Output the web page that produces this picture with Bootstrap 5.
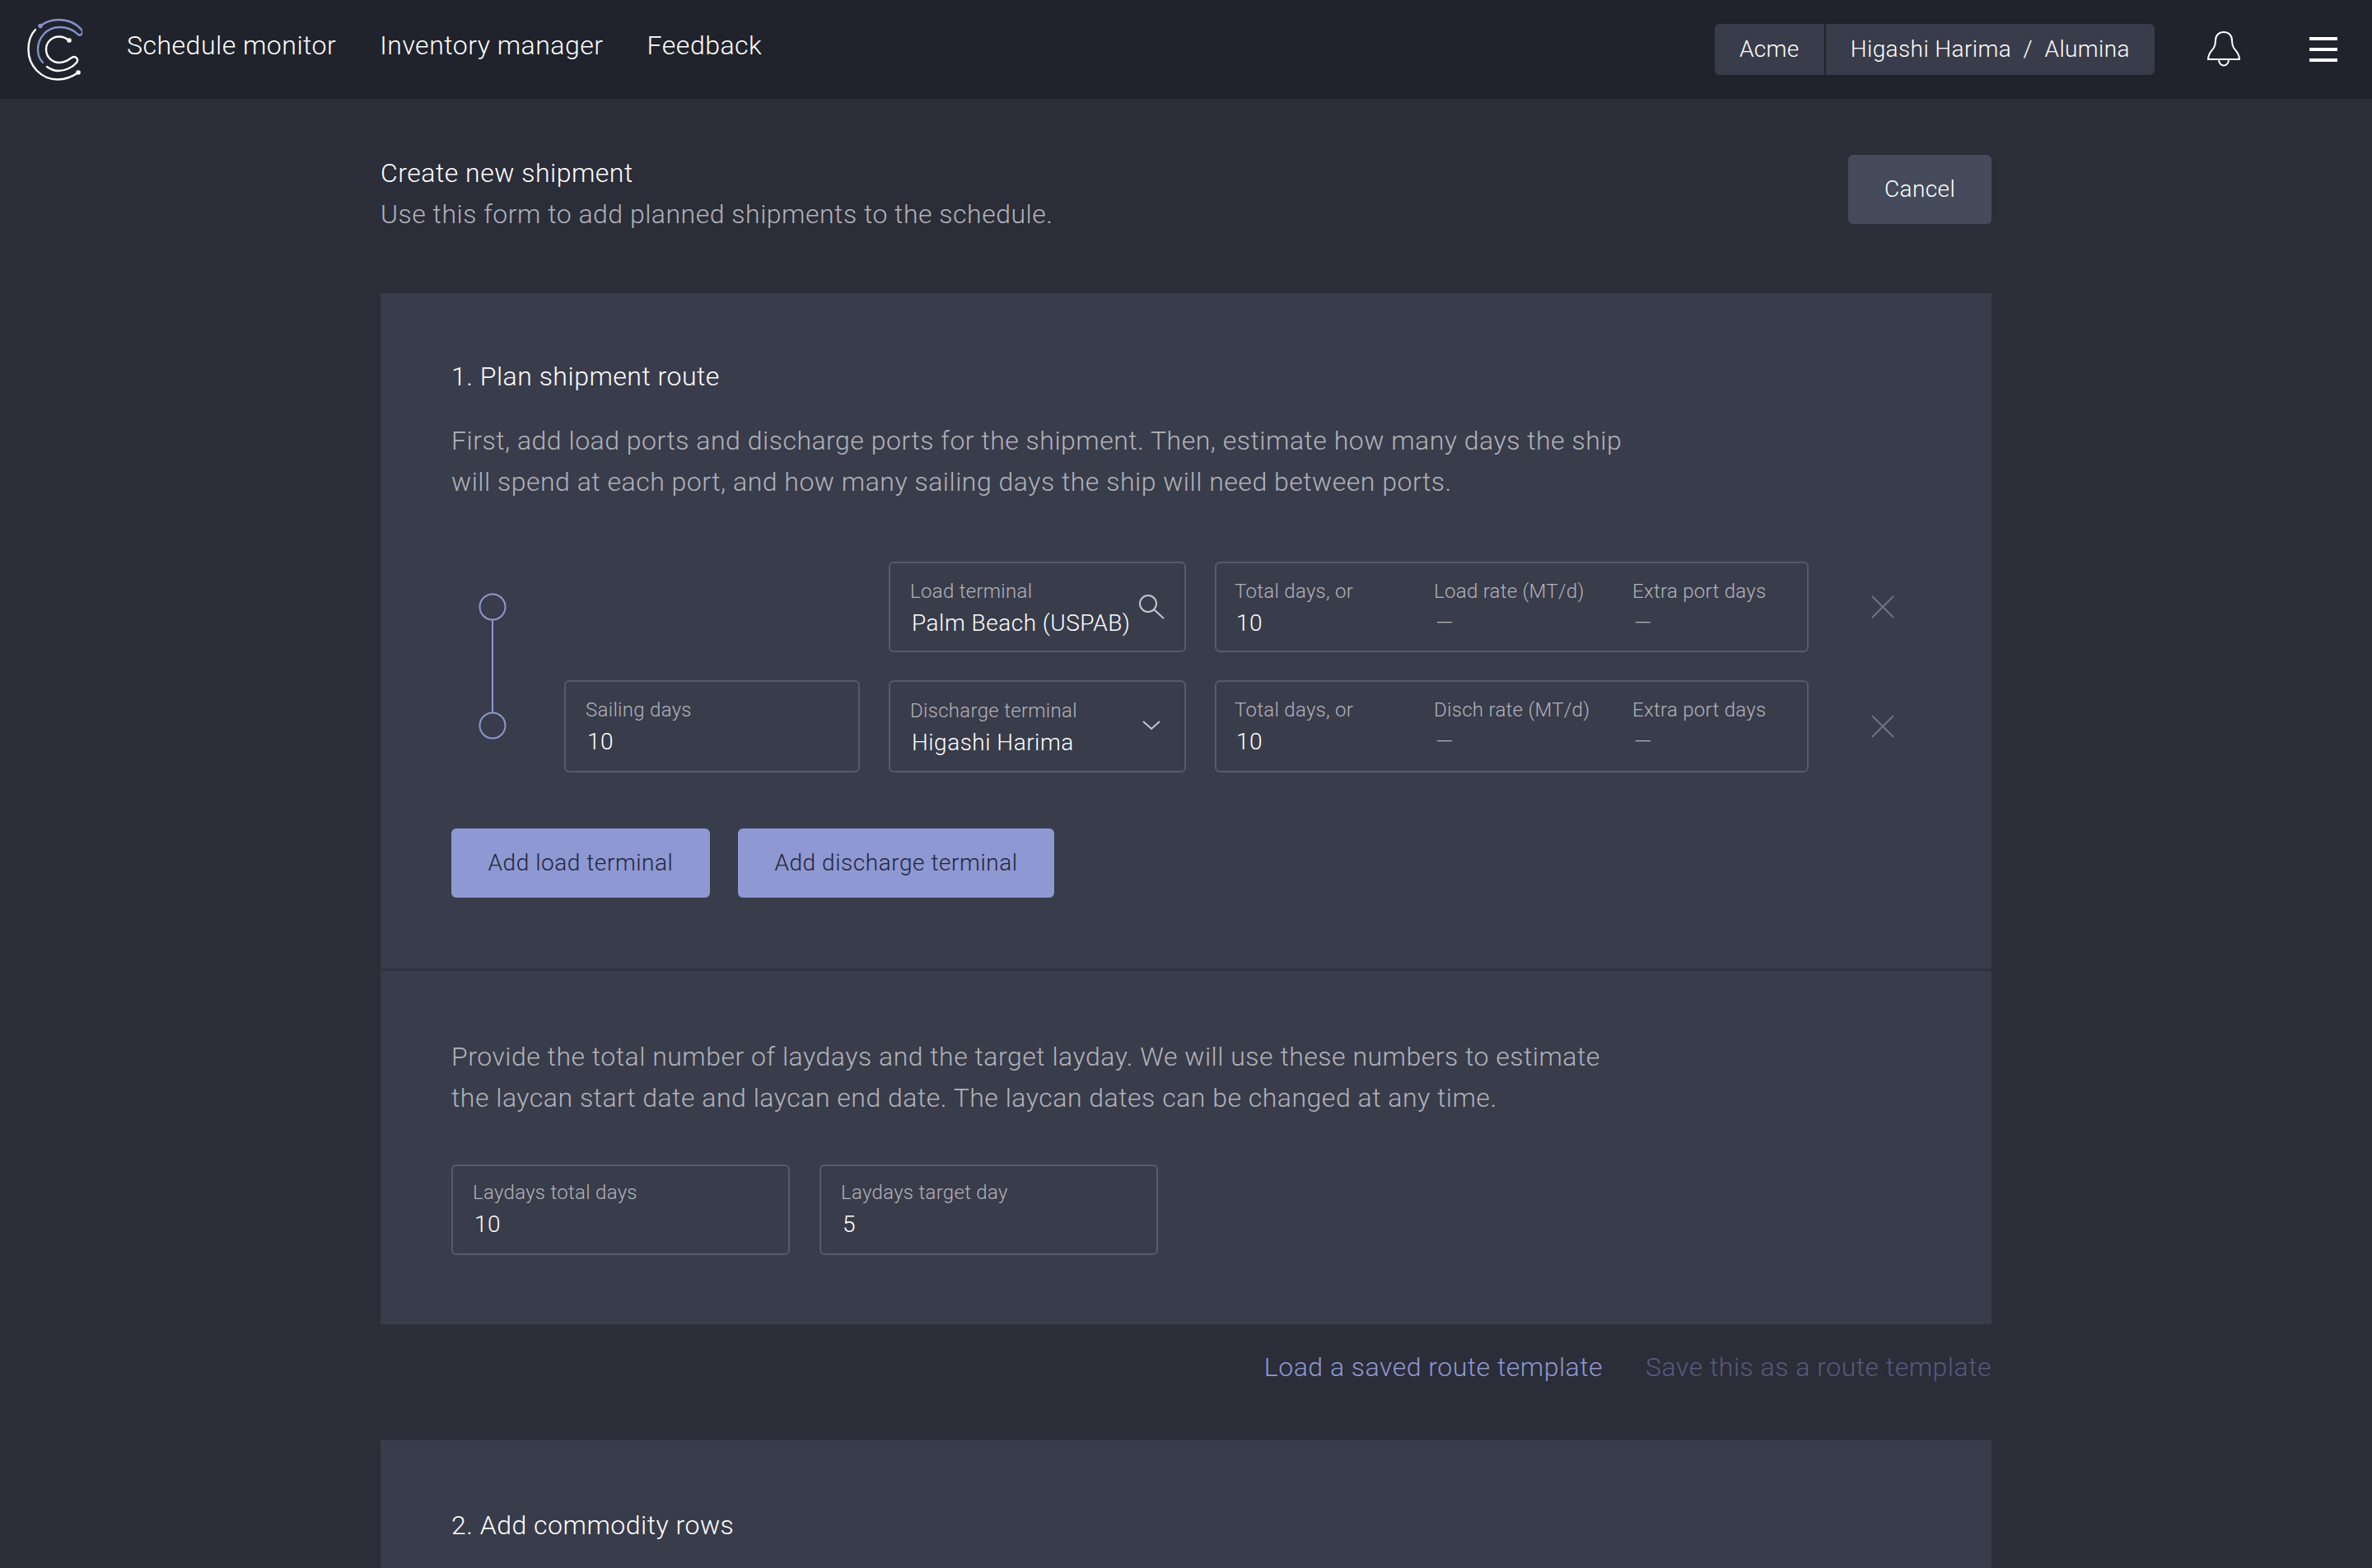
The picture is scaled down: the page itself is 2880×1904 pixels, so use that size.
<!doctype html>
<html lang="en"><head><meta charset="utf-8"><title>Create new shipment</title>
<link href="https://cdn.jsdelivr.net/npm/bootstrap@5.3.0/dist/css/bootstrap.min.css" rel="stylesheet">
<style>
html,body{height:100%;overflow:hidden}
body{background:#2b2d38;font-family:Roboto,"Liberation Sans",sans-serif;font-weight:300;font-size:32px;line-height:50px;letter-spacing:.5px;color:#fff}
.topbar{height:120px;background:#20232b;padding:0 42px 0 30px}
.logo-svg{width:70px;height:80px;margin-right:54px}
.topnav{gap:53px;margin-bottom:10px}
.topnav a{color:#fff;text-decoration:none;font-size:32px}
.ctx-btn{background:#393c4a;color:#fff;border:0;font-weight:300;font-size:28px;height:62px;line-height:62px;padding:0 30px;letter-spacing:.4px;border-radius:6px}
.ctx-btn:hover{background:#393c4a;color:#fff}
.ctx-sep{width:2px;background:#20232b}
.bell-svg{width:40px;height:44px;margin:0 84px 0 64px}
.burger{width:34px;height:30px;display:flex;flex-direction:column;justify-content:space-between}
.burger i{display:block;height:4px;background:#fff}
.shell{width:1956px;margin:0 auto;padding-top:65px}
.head{margin-bottom:71px}
.muted-text{color:#b1b2ba}
.btn-cancel{background:#464b5b;color:#fff;font-weight:300;font-size:28px;width:174px;height:84px;margin-top:3px;border:0;border-radius:6px;letter-spacing:.4px}
.btn-cancel:hover{background:#464b5b;color:#fff}
.panel-a{background:#393c4a}
.sec-one{padding:76px 86px 86px}
.sec-two{padding:79px 86px 84px;border-top:3px solid #2f323e}
.sec-three{padding:78px 86px 200px}
.para{margin:28px 0 72px;color:#b1b2ba}
.para-b{margin:0 0 56px;color:#b1b2ba}
.route{display:grid;grid-template-columns:102px 359px 361px 721px 110px;column-gap:35px;row-gap:34px}
.rail{grid-row:1/3;grid-column:1}
.rail svg{display:block;width:102px;height:256px}
.fld{border:2px solid #575a6b;border-radius:6px;padding:19px 22px 13px 24px;height:110px}
.tall{height:112px}
.fld-sm{padding-top:17px;width:411px}
.lbl{font-size:24px;line-height:30px;color:#b1b2ba;white-space:nowrap;display:block;letter-spacing:.3px}
.val{font-size:28px;line-height:40px;margin-top:4px;padding-left:2px;color:#fff;white-space:nowrap;display:block}
.val-dim{color:#b1b2ba}
.sub3{display:grid;grid-template-columns:242px 241px 1fr;padding-left:22px}
.ico{width:36px;height:36px;flex:none}
.x-cell{display:flex;align-items:center;justify-content:center}
.x-svg{width:28px;height:28px}
.btn-add{background:#8e98d2;color:#23253a;font-weight:300;font-size:28px;height:84px;border:0;border-radius:6px;padding:0;letter-spacing:.55px}
.btn-add:hover{background:#8e98d2;color:#23253a}
.w-load{width:314px}.w-disch{width:384px}
.add-row{margin-top:68px;gap:34px}
.lay-row{gap:36px}
.linkrow{padding-top:27px;margin-bottom:64px;gap:52px}
.linkrow a{text-decoration:none;color:#8e98d2}
.linkrow a.off{color:#575a7c}
</style></head>
<body>
<nav class="topbar d-flex align-items-center">
 <svg class="logo-svg" viewBox="30 20 70 80" fill="none" stroke-linecap="round" aria-label="logo">
  <path d="M43 36C37 42 34.5 52 34.5 60C34.5 80 50 96.5 70 96.5C79 96.5 88 93 95 88" stroke="#fff" stroke-width="2.4"/>
  <circle cx="95" cy="88" r="2.8" fill="#fff"/>
  <path d="M49 31.5C56 26 63 24 71 24C82 24 92 28 99 36C102 40 98 44 95 42C89 36 80 33 72 33C57 33 46 46 46 60C46 66 48 72 52 76" stroke="#8592c8" stroke-width="2.4"/>
  <circle cx="49" cy="31.5" r="2.8" fill="#8592c8"/>
  <path d="M84 49C80 46 76 44.5 72 44.5C62 44.5 56 52 56 60C56 69 63 76 72 76C78 76 83 73 87 70C92 67 96 72 93 76C88 82 79 86 71 86C66 86 61 84 57 81" stroke="#fff" stroke-width="2.4"/>
  <circle cx="84" cy="49" r="2.8" fill="#fff"/>
 </svg>
 <div class="topnav d-flex"><a href="#">Schedule monitor</a><a href="#">Inventory manager</a><a href="#">Feedback</a></div>
 <div class="ms-auto d-flex align-items-center">
  <div class="d-flex">
   <button class="btn ctx-btn rounded-end-0">Acme</button><span class="ctx-sep"></span><button class="btn ctx-btn rounded-start-0">Higashi Harima&nbsp; /&nbsp; Alumina</button>
  </div>
  <svg class="bell-svg" viewBox="0 0 40 44" fill="none" stroke="#fff" stroke-width="2"><path d="M1 34C1 27 5 24 8 20C10 16 10 13 10 11C10 5 14 1 20 1C26 1 30 5 30 11C30 13 30 16 32 20C35 24 39 27 39 34Z"/><path d="M14 34C14 44 26 44 26 34"/></svg>
  <div class="burger"><i></i><i></i><i></i></div>
 </div>
</nav>
<main class="shell">
 <div class="head d-flex justify-content-between align-items-start">
  <div><div>Create new shipment</div><div class="muted-text">Use this form to add planned shipments to the schedule.</div></div>
  <button class="btn btn-cancel">Cancel</button>
 </div>
 <div class="panel-a">
  <section class="sec-one">
   <div>1. Plan shipment route</div>
   <p class="para">First, add load ports and discharge ports for the shipment. Then, estimate how many days the ship<br>will spend at each port, and how many sailing days the ship will need between ports.</p>
   <div class="route">
    <div class="rail"><svg viewBox="0 0 102 256" fill="none" stroke="#8e98d2" stroke-width="2"><circle cx="50" cy="55" r="15.5"/><path d="M50 70.5V183.5"/><circle cx="50" cy="199" r="15.5"/></svg></div>
    <div class="fld d-flex align-items-center justify-content-between" style="grid-column:3;grid-row:1">
     <div><span class="lbl">Load terminal</span><span class="val">Palm Beach (USPAB)</span></div>
     <svg class="ico mb-2" viewBox="0 0 36 36" fill="none" stroke="#c5c6cd" stroke-width="2"><circle cx="14" cy="15" r="10"/><path d="M21 22L33 33"/></svg>
    </div>
    <div class="fld sub3" style="grid-column:4;grid-row:1">
     <div><span class="lbl">Total days, or</span><span class="val">10</span></div>
     <div><span class="lbl">Load rate (MT/d)</span><span class="val val-dim">—</span></div>
     <div><span class="lbl">Extra port days</span><span class="val val-dim">—</span></div>
    </div>
    <div class="x-cell" style="grid-column:5;grid-row:1"><svg class="x-svg" viewBox="0 0 28 28" stroke="#6f7283" stroke-width="2"><path d="M1 1L27 27M27 1L1 27"/></svg></div>
    <div class="fld tall" style="grid-column:2;grid-row:2"><span class="lbl">Sailing days</span><span class="val">10</span></div>
    <div class="fld tall d-flex align-items-center justify-content-between" style="grid-column:3;grid-row:2">
     <div><span class="lbl">Discharge terminal</span><span class="val">Higashi Harima</span></div>
     <svg class="ico mb-2" viewBox="0 0 36 36" fill="none" stroke="#c5c6cd" stroke-width="2"><path d="M8 13L18 22L28 13"/></svg>
    </div>
    <div class="fld tall sub3" style="grid-column:4;grid-row:2">
     <div><span class="lbl">Total days, or</span><span class="val">10</span></div>
     <div><span class="lbl">Disch rate (MT/d)</span><span class="val val-dim">—</span></div>
     <div><span class="lbl">Extra port days</span><span class="val val-dim">—</span></div>
    </div>
    <div class="x-cell" style="grid-column:5;grid-row:2"><svg class="x-svg" viewBox="0 0 28 28" stroke="#6f7283" stroke-width="2"><path d="M1 1L27 27M27 1L1 27"/></svg></div>
   </div>
   <div class="add-row d-flex"><button class="btn btn-add w-load">Add load terminal</button><button class="btn btn-add w-disch">Add discharge terminal</button></div>
  </section>
  <section class="sec-two">
   <p class="para-b">Provide the total number of laydays and the target layday. We will use these numbers to estimate<br>the laycan start date and laycan end date. The laycan dates can be changed at any time.</p>
   <div class="lay-row d-flex">
    <div class="fld fld-sm"><span class="lbl">Laydays total days</span><span class="val">10</span></div>
    <div class="fld fld-sm"><span class="lbl">Laydays target day</span><span class="val">5</span></div>
   </div>
  </section>
 </div>
 <div class="linkrow d-flex justify-content-end"><a href="#">Load a saved route template</a><a href="#" class="off">Save this as a route template</a></div>
 <div class="panel-a sec-three"><div>2. Add commodity rows</div></div>
</main>
<script src="https://cdn.jsdelivr.net/npm/bootstrap@5.3.0/dist/js/bootstrap.bundle.min.js"></script>
</body></html>
